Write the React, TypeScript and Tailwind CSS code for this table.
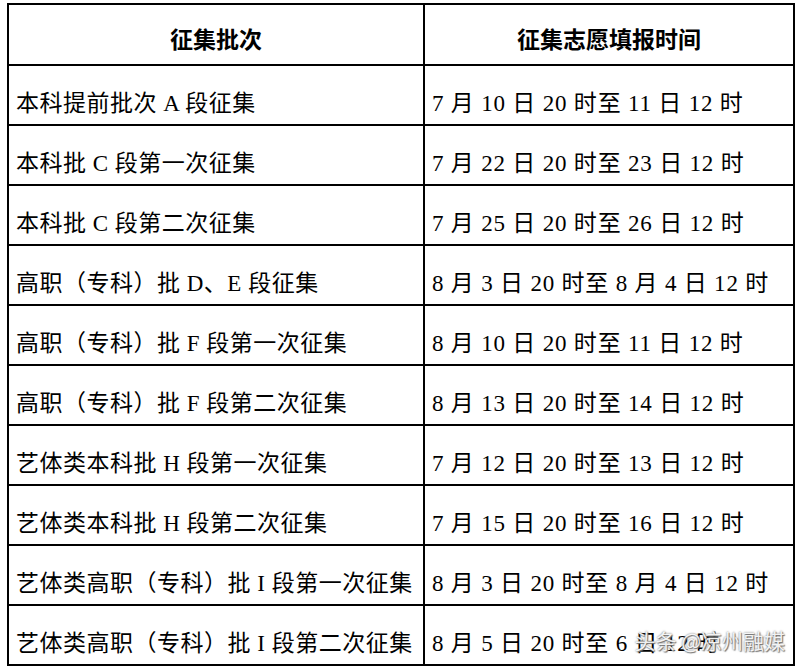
import React from 'react';

const rows: [string, string][] = [
  ['本科提前批次 A 段征集', '7 月 10 日 20 时至 11 日 12 时'],
  ['本科批 C 段第一次征集', '7 月 22 日 20 时至 23 日 12 时'],
  ['本科批 C 段第二次征集', '7 月 25 日 20 时至 26 日 12 时'],
  ['高职（专科）批 D、E 段征集', '8 月 3 日 20 时至 8 月 4 日 12 时'],
  ['高职（专科）批 F 段第一次征集', '8 月 10 日 20 时至 11 日 12 时'],
  ['高职（专科）批 F 段第二次征集', '8 月 13 日 20 时至 14 日 12 时'],
  ['艺体类本科批 H 段第一次征集', '7 月 12 日 20 时至 13 日 12 时'],
  ['艺体类本科批 H 段第二次征集', '7 月 15 日 20 时至 16 日 12 时'],
  ['艺体类高职（专科）批 I 段第一次征集', '8 月 3 日 20 时至 8 月 4 日 12 时'],
  ['艺体类高职（专科）批 I 段第二次征集', '8 月 5 日 20 时至 6 日 12 时'],
];

const bodyFont = { fontFamily: '"Liberation Serif", "Noto Sans CJK SC", serif' };
const headFont = { fontFamily: '"Liberation Sans", "Noto Sans CJK SC", sans-serif' };

export default function App() {
  return (
    <div className="w-[802px] h-[670px] bg-white pt-[3px] pl-[7px]">
      <div className="relative w-[788px] border-l-2 border-t-2 border-black text-black">
        {/* header */}
        <div className="flex h-[61px]" style={headFont}>
          <div className="w-[416px] border-r-2 border-b-2 border-black flex items-center justify-center pt-3 text-[23px] font-bold">
            征集批次
          </div>
          <div className="w-[370px] border-r-2 border-b-2 border-black flex items-center justify-center pt-3 text-[23px] font-bold">
            征集志愿填报时间
          </div>
        </div>

        {rows.map(([batch, time], i) => (
          <div key={i} className="flex h-[60px]" style={bodyFont}>
            <div className="w-[416px] border-r-2 border-b-2 border-black flex items-center pl-[7px] pt-[18px] text-[23px] tracking-[0.5px] whitespace-nowrap">
              {batch}
            </div>
            <div className="w-[370px] border-r-2 border-b-2 border-black flex items-center pl-[7px] pt-[18px] text-[23px] tracking-[0.8px] whitespace-nowrap">
              {time}
            </div>
          </div>
        ))}

        {/* watermark */}
        <div
          className="absolute right-[10px] bottom-[10px] text-[21px] text-white/90 whitespace-nowrap"
          style={{
            fontFamily: '"Noto Sans CJK SC", sans-serif',
            textShadow: '0 0 2px #666, 1px 1px 1px #777',
          }}
        >
          头条 @凉州融媒
        </div>
      </div>
    </div>
  );
}
